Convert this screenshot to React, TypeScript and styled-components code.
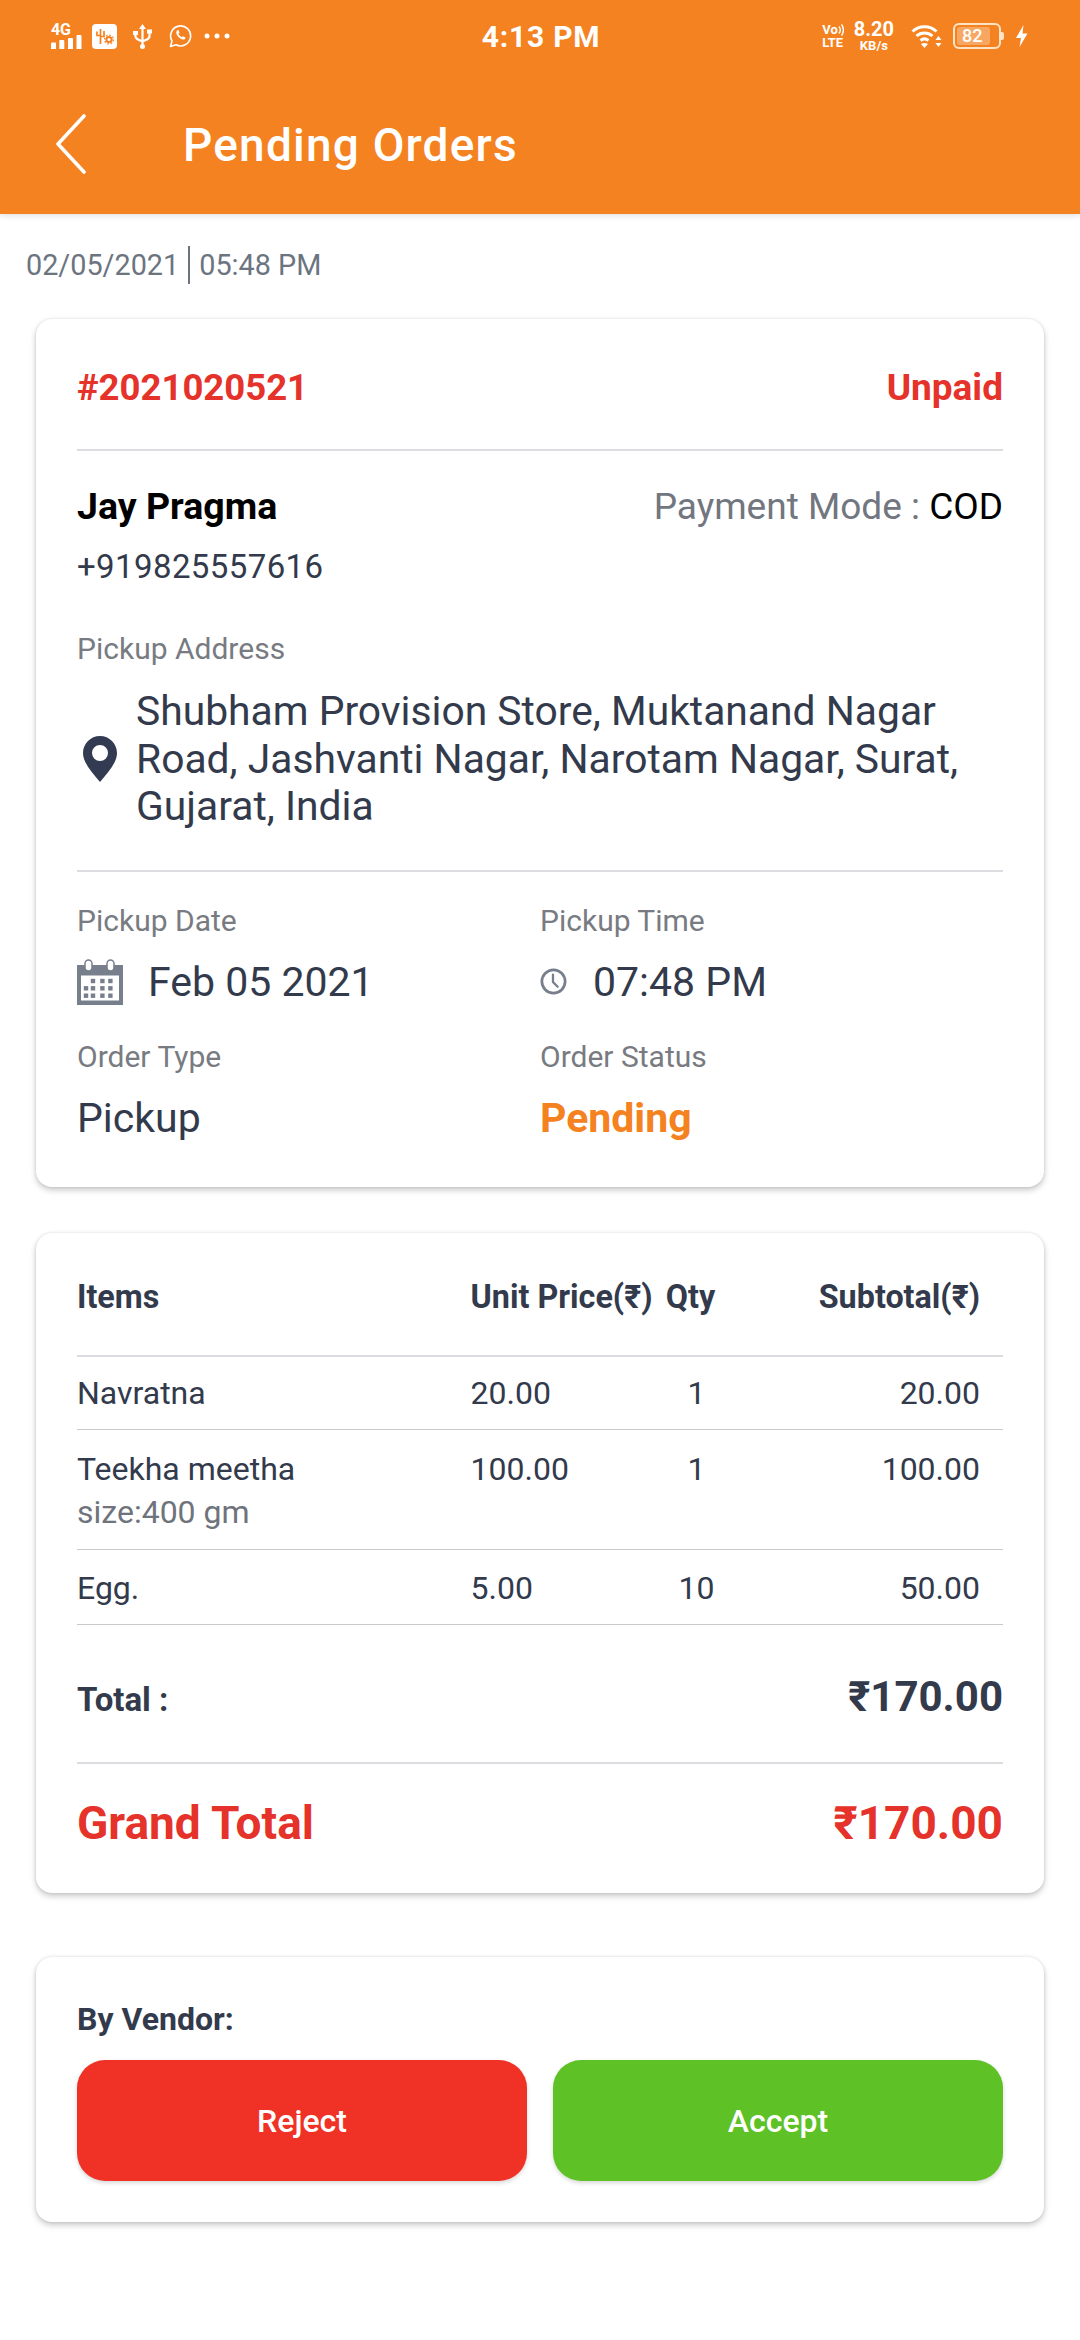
import React from 'react'
import styled, { createGlobalStyle } from 'styled-components'

const GlobalStyle = createGlobalStyle`
  html, body { margin: 0; padding: 0; background: #fff; }
  * { box-sizing: border-box; }
  body { font-family: Roboto, "Liberation Sans", sans-serif; }
`

const Page = styled.div`
  width: 1080px;
  height: 2340px;
  background: #fff;
  overflow: hidden;
`

const Header = styled.header`
  height: 214px;
  background: #f58220;
  color: #fff;
  box-shadow: 0 2px 6px rgba(0, 0, 0, 0.12);
`

const StatusBar = styled.div`
  height: 72px;
  display: grid;
  grid-template-columns: 1fr auto 1fr;
  align-items: center;
`

const StatusLeft = styled.div`
  display: flex;
  align-items: center;
  padding-left: 51px;
`

const StatusRight = styled.div`
  display: flex;
  align-items: center;
  justify-content: flex-end;
  padding-right: 52px;
`

const Clock = styled.div`
  font-size: 30px;
  font-weight: 700;
  letter-spacing: 0.8px;
  padding-left: 2px;
`

const SignalBox = styled.div`
  width: 31px;
  height: 25px;
  margin-right: 10px;
  display: grid;
  > * {
    grid-area: 1 / 1;
  }
`

const SignalLabel = styled.span`
  font-size: 16px;
  font-weight: 700;
  line-height: 12px;
  letter-spacing: -0.3px;
`

const VoLte = styled.div`
  margin-right: 10px;
  display: flex;
  flex-direction: column;
  font-size: 13px;
  font-weight: 700;
  line-height: 13px;
  span {
    display: flex;
    align-items: center;
  }
`

const Speed = styled.div`
  margin-right: 17px;
  display: flex;
  flex-direction: column;
  align-items: center;
  font-size: 20px;
  font-weight: 700;
  line-height: 18px;
  small {
    font-size: 13px;
    line-height: 12px;
    margin-top: 2px;
  }
`

const Battery = styled.div`
  width: 48px;
  height: 26px;
  margin: 0 15px 0 11px;
  border: 2px solid #ffe3c6;
  border-radius: 6px;
  padding: 2px;
  position: relative;
  &::after {
    content: '';
    position: absolute;
    right: -5px;
    top: 7px;
    width: 3px;
    height: 8px;
    border-radius: 0 2px 2px 0;
    background: #ffe3c6;
  }
`

const BatteryLevel = styled.div<{ $level: number }>`
  height: 100%;
  width: ${p => p.$level}%;
  border-radius: 3px;
  background: rgba(255, 255, 255, 0.3);
  font-size: 18px;
  font-weight: 500;
  line-height: 18px;
  padding-left: 5px;
  white-space: nowrap;
`

const Glyph = styled.svg<{ $gap?: number }>`
  display: block;
  flex: none;
  margin-right: ${p => p.$gap ?? 0}px;
`

const PinGlyph = styled(Glyph)`
  margin-left: 6px;
`

const TitleRow = styled.div`
  height: 142px;
  padding: 1px 0 0 55px;
  display: flex;
  align-items: center;
`

const Title = styled.h1`
  margin: 2px 0 0 96px;
  font-size: 46px;
  font-weight: 500;
  letter-spacing: 1.2px;
`

const Stamp = styled.div`
  height: 38px;
  margin: 32px 0 35px 26px;
  display: flex;
  align-items: center;
  font-size: 28.800px;
  color: #6c7480;
  span + span {
    margin-left: 9px;
    padding-left: 9px;
    border-left: 2px solid #6c7480;
    line-height: 38px;
  }
`

const Card = styled.section<{ $height: number; $gap?: number }>`
  height: ${p => p.$height}px;
  margin: 0 36px ${p => p.$gap ?? 0}px;
  padding: 0 41px;
  background: #fff;
  border-radius: 16px;
  box-shadow: 0 3px 6px rgba(0, 0, 0, 0.22), 0 0 3px rgba(0, 0, 0, 0.1);
`

const Spread = styled.div<{ $height: number; $rule?: boolean; $end?: boolean }>`
  height: ${p => p.$height}px;
  display: flex;
  align-items: ${p => (p.$end ? 'flex-end' : 'center')};
  justify-content: space-between;
  border-bottom: ${p => (p.$rule ? '2.5px solid #dcdde0' : 'none')};
`

const OrderRef = styled.div`
  padding-top: 6px;
  font-size: 36.500px;
  font-weight: 700;
  color: #e5322a;
`

const PaidState = styled.div`
  padding-top: 6px;
  font-size: 37px;
  font-weight: 700;
  color: #e5322a;
`

const Customer = styled.div`
  font-size: 37.500px;
  font-weight: 700;
  color: #000;
`

const PayMode = styled.div`
  font-size: 37px;
  color: #71767f;
  b {
    font-weight: 400;
    color: #000;
  }
`

const Phone = styled.div`
  margin-top: 19.500px;
  font-size: 33px;
  line-height: 40px;
  letter-spacing: 0.4px;
  color: #323a4c;
`

const Caption = styled.div`
  font-size: 30px;
  line-height: 36px;
  color: #787b81;
`

const AddressCaption = styled(Caption)`
  margin-top: 43.500px;
`

const AddressRow = styled.div`
  margin-top: 21.500px;
  padding-bottom: 39px;
  display: flex;
  align-items: center;
  border-bottom: 2.5px solid #dcdde0;
`

const Address = styled.div`
  margin-left: 19px;
  font-size: 40.800px;
  line-height: 47.600px;
  color: #323a4c;
`

const Facts = styled.div`
  display: grid;
  grid-template-columns: 463px 1fr;
  padding-top: 31px;
`

const Fact = styled.div`
  height: 136px;
`

const FactValue = styled.div<{ $accent?: boolean }>`
  margin-top: 17px;
  height: 52px;
  display: flex;
  align-items: center;
  font-size: 41px;
  font-weight: ${p => (p.$accent ? 700 : 400)};
  color: ${p => (p.$accent ? '#f58220' : '#323a4c')};
`

const ItemHead = styled.div`
  height: 124px;
  padding: 6px 23px 0 0;
  display: grid;
  grid-template-columns: 393.500px 175px 90px 1fr;
  align-items: center;
  font-size: 32.300px;
  line-height: 40px;
  font-weight: 700;
  color: #323a4c;
  border-bottom: 2.5px solid #dcdde0;
`

const ItemRow = styled.div<{ $height: number; $top: number }>`
  height: ${p => p.$height}px;
  padding: ${p => p.$top}px 23px 0 0;
  display: grid;
  grid-template-columns: 393.500px 175px 90px 1fr;
  font-size: 32px;
  line-height: 40px;
  color: #323a4c;
  border-bottom: 1.5px solid #c9cacd;
`

const Cell = styled.div<{ $align?: string }>`
  text-align: ${p => p.$align ?? 'left'};
  white-space: nowrap;
`

const QtyCell = styled(Cell)`
  text-align: center;
  padding-left: 12px;
`

const Variant = styled.div`
  color: #6f737b;
  margin-top: 3px;
`

const TotalLabel = styled.div`
  padding-top: 12px;
  font-size: 33px;
  font-weight: 700;
  color: #323a4c;
`

const TotalValue = styled.div`
  padding-top: 6px;
  font-size: 42px;
  font-weight: 700;
  color: #323a4c;
`

const GrandText = styled.div`
  padding-bottom: 3px;
  font-size: 46px;
  font-weight: 700;
  color: #e5322a;
`

const VendorLabel = styled.div`
  padding-top: 42px;
  height: 103px;
  font-size: 32px;
  line-height: 40px;
  font-weight: 700;
  color: #323a4c;
`

const Actions = styled.div`
  display: flex;
  gap: 26px;
`

const ActionButton = styled.button<{ $bg: string }>`
  flex: 1;
  height: 121px;
  border: none;
  border-radius: 28px;
  background: ${p => p.$bg};
  color: #fff;
  font-family: inherit;
  font-size: 32px;
  font-weight: 500;
  box-shadow: 0 2px 4px rgba(0, 0, 0, 0.16);
`

const items = [
  { name: 'Navratna', price: '20.00', qty: '1', sub: '20.00', height: 73, top: 15.5 },
  { name: 'Teekha meetha', note: 'size:400 gm', price: '100.00', qty: '1', sub: '100.00', height: 120, top: 18.5 },
  { name: 'Egg.', price: '5.00', qty: '10', sub: '50.00', height: 75, top: 17.5 },
]

const Pin = () => (
  <PinGlyph width="34" height="46" viewBox="0 0 34 46">
    <path fill="#333b52" fillRule="evenodd" d="M17 0C7.600 0 0 7.600 0 17C0 27 9 36 17 46C25 36 34 27 34 17C34 7.600 26.400 0 17 0ZM17 9A8 8 0 1 1 17 25A8 8 0 1 1 17 9Z" />
  </PinGlyph>
)

const calendarCells = [
  [16, 22], [25.400, 22], [33.400, 22],
  [9, 29.300], [16, 29.300], [25.400, 29.300], [33.400, 29.300],
  [9, 36.700], [16, 36.700], [25.400, 36.700], [33.400, 36.700],
]

const CalendarIcon = () => (
  <Glyph width="46" height="46" viewBox="0 0 46 46" $gap={25}>
    <rect y="6" width="46" height="40" fill="#777e8c" />
    <rect x="4" y="16.500" width="38" height="25" fill="#fff" />
    <rect x="8" y="1" width="7" height="11" rx="3.500" fill="#fff" stroke="#777e8c" strokeWidth="1.500" />
    <rect x="30" y="1" width="7" height="11" rx="3.500" fill="#fff" stroke="#777e8c" strokeWidth="1.500" />
    {calendarCells.map(([x, y]) => (
      <rect key={`${x}-${y}`} x={x - 2.200} y={y - 2.200} width="4.400" height="4.400" fill="#777e8c" />
    ))}
  </Glyph>
)

const ClockIcon = () => (
  <Glyph width="27" height="27" viewBox="0 0 26 26" $gap={26}>
    <circle cx="13" cy="13" r="11.200" fill="none" stroke="#777e8c" strokeWidth="2.600" />
    <path d="M12.500 6.500V13.500L17 18" fill="none" stroke="#777e8c" strokeWidth="2.200" strokeLinecap="round" />
  </Glyph>
)

export default function App() {
  return (
    <Page>
      <GlobalStyle />
      <Header>
        <StatusBar>
          <StatusLeft>
            <SignalBox>
              <SignalLabel>4G</SignalLabel>
              <Glyph width="31" height="25" viewBox="0 0 31 25">
                <path fill="#fff" d="M0 19.500a1 1 0 0 1 1-1h3a1 1 0 0 1 1 1V25H0zM8.300 17a1 1 0 0 1 1-1h3a1 1 0 0 1 1 1v8h-5zM17 15a1 1 0 0 1 1-1h3a1 1 0 0 1 1 1v10h-5zM25.500 12a1 1 0 0 1 1-1h3a1 1 0 0 1 1 1v13h-5z" />
              </Glyph>
            </SignalBox>
            <Glyph width="25" height="25" viewBox="0 0 25 25" $gap={16}>
              <rect width="25" height="25" rx="4" fill="#fff" />
              <path d="M8.500 5V20M5 7.500V11.500H8.500M12 7V12.500H8.500" fill="none" stroke="#f58220" strokeWidth="1.700" />
              <circle cx="17" cy="15.500" r="2.600" fill="none" stroke="#f58220" strokeWidth="2" />
              <circle cx="17" cy="15.500" r="4.400" fill="none" stroke="#f58220" strokeWidth="1.300" strokeDasharray="1.700 1.700" />
            </Glyph>
            <Glyph width="19" height="25" viewBox="0 0 19 25" $gap={17}>
              <path d="M9.500 4V23M2.500 10V12.500C2.500 14.500 4.500 15.500 9.500 17.500C14.500 15.500 16.500 14.500 16.500 12.500V9" fill="none" stroke="#fff" strokeWidth="2.200" />
              <path fill="#fff" d="M9.500 0L13 5H6zM0 7h5v4H0zM14 5.500h5v4h-5z" />
              <circle cx="9.500" cy="22.500" r="2.500" fill="#fff" />
            </Glyph>
            <Glyph width="23" height="24" viewBox="0 0 23 24" $gap={12}>
              <path d="M1.500 22.500L3 17A10 10 0 1 1 7 20.800Z" fill="none" stroke="#fff" strokeWidth="1.600" strokeLinejoin="round" />
              <path d="M8 6.500C6.500 8 7.500 11 9.500 13C11.500 15 14.500 16.500 16 15L16.500 13.500L13.800 12.200L12.800 13.200C11.500 12.800 10 11 9.500 9.800L10.500 8.800L9.500 6Z" fill="#fff" />
            </Glyph>
            <Glyph width="26" height="6" viewBox="0 0 26 6">
              <circle cx="3" cy="3" r="2.500" fill="#fff" />
              <circle cx="13" cy="3" r="2.500" fill="#fff" />
              <circle cx="23" cy="3" r="2.500" fill="#fff" />
            </Glyph>
          </StatusLeft>
          <Clock>4:13 PM</Clock>
          <StatusRight>
            <VoLte>
              <span>
                Vo
                <Glyph width="6" height="12" viewBox="0 0 6 12">
                  <path d="M1 2.500C2.500 4.500 2.500 7.500 1 9.500M3.500 0.500C6 3.500 6 8.500 3.500 11.500" fill="none" stroke="#fff" strokeWidth="1.400" />
                </Glyph>
              </span>
              <span>LTE</span>
            </VoLte>
            <Speed>
              <span>8.20</span>
              <small>KB/s</small>
            </Speed>
            <Glyph width="31" height="24" viewBox="0 0 31 24">
              <path d="M1.500 7.500C8 1 19 1 25.500 7.500M5.500 12C10 8 17 8 21.500 12M9.500 16.500C12 14.500 15 14.500 17.500 16.500" fill="none" stroke="#fff" strokeWidth="3" />
              <path fill="#fff" d="M13.500 24L10 20C12 18.500 15 18.500 17 20ZM27.500 12L30.500 16H24.500zM27.500 23L24.500 19H30.500z" />
            </Glyph>
            <Battery>
              <BatteryLevel $level={82}>82</BatteryLevel>
            </Battery>
            <Glyph width="12" height="22" viewBox="0 0 12 22">
              <path fill="#fff" d="M7.500 0L0 13H5L3.500 22L11.500 8.500H6.500Z" />
            </Glyph>
          </StatusRight>
        </StatusBar>
        <TitleRow>
          <Glyph width="32" height="60" viewBox="0 0 32 60">
            <path d="M29 2L3 30L29 58" fill="none" stroke="#fff" strokeWidth="3.600" strokeLinecap="round" strokeLinejoin="round" />
          </Glyph>
          <Title>Pending Orders</Title>
        </TitleRow>
      </Header>

      <Stamp>
        <span>02/05/2021</span>
        <span>05:48 PM</span>
      </Stamp>

      <Card $height={868} $gap={46}>
        <Spread $height={132} $rule>
          <OrderRef>#2021020521</OrderRef>
          <PaidState>Unpaid</PaidState>
        </Spread>
        <Spread $height={76.5} $end>
          <Customer>Jay Pragma</Customer>
          <PayMode>
            Payment Mode : <b>COD</b>
          </PayMode>
        </Spread>
        <Phone>+919825557616</Phone>
        <AddressCaption>Pickup Address</AddressCaption>
        <AddressRow>
          <Pin />
          <Address>
            Shubham Provision Store, Muktanand Nagar
            <br />
            Road, Jashvanti Nagar, Narotam Nagar, Surat,
            <br />
            Gujarat, India
          </Address>
        </AddressRow>
        <Facts>
          <Fact>
            <Caption>Pickup Date</Caption>
            <FactValue>
              <CalendarIcon />
              Feb 05 2021
            </FactValue>
          </Fact>
          <Fact>
            <Caption>Pickup Time</Caption>
            <FactValue>
              <ClockIcon />
              07:48 PM
            </FactValue>
          </Fact>
          <Fact>
            <Caption>Order Type</Caption>
            <FactValue>Pickup</FactValue>
          </Fact>
          <Fact>
            <Caption>Order Status</Caption>
            <FactValue $accent>Pending</FactValue>
          </Fact>
        </Facts>
      </Card>

      <Card $height={660} $gap={64}>
        <ItemHead>
          <Cell>Items</Cell>
          <Cell>Unit Price(₹)</Cell>
          <Cell $align="center">Qty</Cell>
          <Cell $align="right">Subtotal(₹)</Cell>
        </ItemHead>
        {items.map(item => (
          <ItemRow key={item.name} $height={item.height} $top={item.top}>
            <Cell>
              {item.name}
              {item.note && <Variant>{item.note}</Variant>}
            </Cell>
            <Cell>{item.price}</Cell>
            <QtyCell>{item.qty}</QtyCell>
            <Cell $align="right">{item.sub}</Cell>
          </ItemRow>
        ))}
        <Spread $height={139} $rule>
          <TotalLabel>Total :</TotalLabel>
          <TotalValue>₹170.00</TotalValue>
        </Spread>
        <Spread $height={121}>
          <GrandText>Grand Total</GrandText>
          <GrandText>₹170.00</GrandText>
        </Spread>
      </Card>

      <Card $height={265}>
        <VendorLabel>By Vendor:</VendorLabel>
        <Actions>
          <ActionButton $bg="#f03226">Reject</ActionButton>
          <ActionButton $bg="#5ec125">Accept</ActionButton>
        </Actions>
      </Card>
    </Page>
  )
}
